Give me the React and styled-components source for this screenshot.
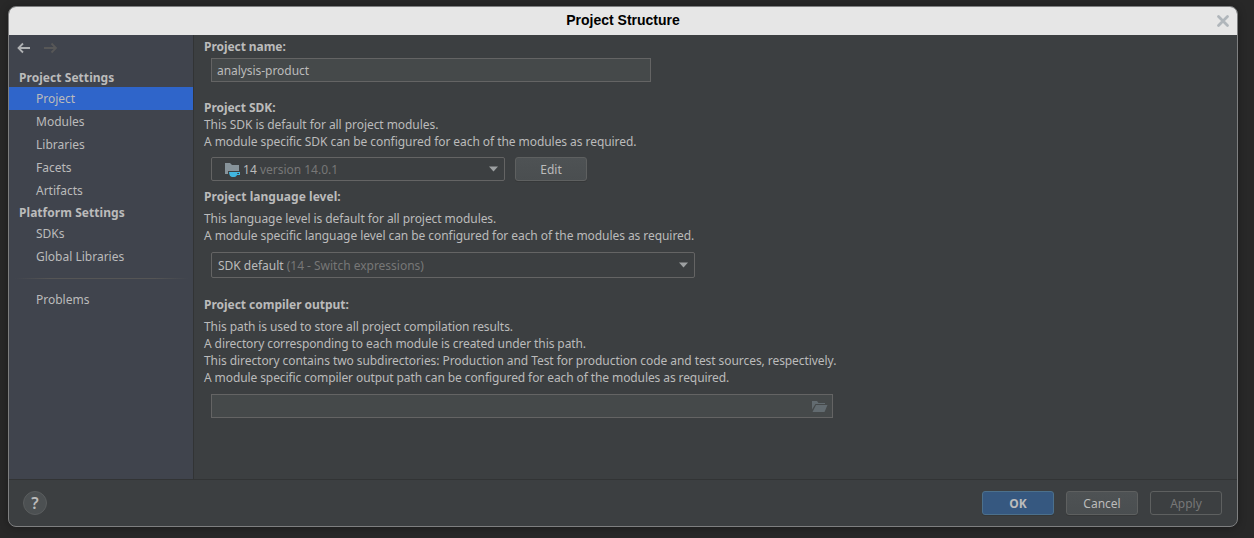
import React from "react";
import styled, { createGlobalStyle, css } from "styled-components";

const GlobalStyle = createGlobalStyle`
  * { box-sizing: border-box; }
  html, body { margin: 0; padding: 0; background: #282828; }
  body { width: 1254px; height: 538px; overflow: hidden; font-family: "Noto Sans", sans-serif; font-size: 12px; color: #bbbbbb; }
`;

const Desktop = styled.div`
  width: 1254px;
  height: 538px;
  padding: 6px 16px 11px 8px;
  background: #282828;
`;

const Dialog = styled.div`
  display: flex;
  flex-direction: column;
  width: 1230px;
  height: 521px;
  border: 1px solid #7e7f80;
  border-radius: 8px;
  overflow: hidden;
  background: #3c3f41;
  box-shadow: 0 1px 8px rgba(0, 0, 0, 0.3);
`;

const TitleBar = styled.header`
  display: grid;
  grid-template-columns: 28px 1fr 28px;
  align-items: center;
  flex: none;
  height: 28px;
  background: #e6e6e6;
  color: #000;
  font: bold 14px/26px "Liberation Sans", Arial, sans-serif;
`;

const Title = styled.div`
  grid-column: 2;
  text-align: center;
  height: 28px;
`;

const Body = styled.div`
  display: flex;
  height: 444px;
  flex: none;
`;

const Sidebar = styled.nav`
  width: 185px;
  flex: none;
  background: #40444d;
  border-right: 1px solid #323435;
`;

const History = styled.div`
  display: flex;
  gap: 11px;
  height: 32px;
  padding: 6px 0 0 8px;
`;

const NavHeading = styled.div`
  height: 20px;
  padding-left: 10px;
  font-weight: bold;
  line-height: 22px;
  letter-spacing: 0.05px;
`;

const NavItem = styled.div`
  height: 23px;
  padding-left: 27px;
  line-height: 23px;
  background: ${(p) => (p.$selected ? "#2f65ca" : "transparent")};
`;

const NavSeparator = styled.div`
  height: 1px;
  margin: 10px 4px 9px 6px;
  background: linear-gradient(90deg, transparent, #555555 20%, #555555 80%, transparent);
`;

const Content = styled.main`
  flex: 1;
  padding: 3px 0 0 10px;
`;

const Section = styled.section`
  margin-bottom: ${(p) => p.$after || 0}px;
`;

const Heading = styled.div`
  font-weight: bold;
  line-height: 17px;
  height: 17px;
  margin-bottom: ${(p) => p.$after || 0}px;
  letter-spacing: ${(p) => p.$tracking || 0}px;
`;

const Line = styled.div`
  height: 17px;
  line-height: 17px;
  white-space: nowrap;
  letter-spacing: ${(p) => p.$tracking || -0.065}px;
`;

const Controls = styled.div`
  display: flex;
  gap: 10px;
  padding-left: 7px;
  margin-top: ${(p) => p.$before}px;
`;

const box = css`
  display: flex;
  align-items: center;
  border: 1px solid #646464;
  width: ${(p) => p.$width}px;
`;

const Field = styled.div`
  ${box}
  height: 24px;
  padding: 0 4px 0 5px;
  background: #45494a;
  justify-content: space-between;
  letter-spacing: -0.05px;
`;

const Combo = styled.div`
  ${box}
  height: ${(p) => p.$height}px;
  padding: 0 5px 0 ${(p) => p.$indent}px;
  border-radius: 2px;
  letter-spacing: -0.015px;
`;

const ComboText = styled.div`
  flex: 1;
  white-space: pre;
  margin-left: ${(p) => p.$shift || 0}px;
`;

const Muted = styled.span`
  color: #777777;
`;

const variants = {
  plain: css`
    background: linear-gradient(#4e5254, #4a4e50);
    border-color: #5e6060;
    box-shadow: 0 1px 0 #363839;
  `,
  primary: css`
    background: #365880;
    border-color: #4c708c;
    font-weight: bold;
    box-shadow: 0 1px 0 #363839;
  `,
  disabled: css`
    background: transparent;
    border-color: #5e6060;
    color: #777777;
  `,
};

const Button = styled.button`
  width: 72px;
  height: 24px;
  padding: 1px 0 0;
  border: 1px solid;
  border-radius: 3px;
  color: #bbbbbb;
  font: 12px/21px "Noto Sans", sans-serif;
  ${(p) => variants[p.$variant || "plain"]}
`;

const Footer = styled.footer`
  display: flex;
  align-items: center;
  justify-content: space-between;
  flex: 1;
  padding: 0 15px 0 14px;
  border-top: 1px solid #323435;
`;

const Help = styled.div`
  width: 24px;
  height: 24px;
  border: 1px solid #5a5d5e;
  border-radius: 50%;
  background: #4c5052;
  font-size: 16px;
  font-weight: 600;
  line-height: 22px;
  text-align: center;
`;

const Actions = styled.div`
  display: flex;
  gap: 12px;
`;

const Arrow = ({ forward }) => (
  <svg width="15" height="13" viewBox="0 0 15 13" fill="none" stroke={forward ? "#575757" : "#afb1b3"} strokeWidth="1.8">
    <path d={forward ? "M1 7H13M8.5 2.5L13 7L8.5 11.5" : "M13 7H1.5M6 2.5L1.5 7L6 11.5"} />
  </svg>
);

const CloseIcon = () => (
  <svg width="28" height="14" viewBox="-7 0 28 14" stroke="#b0b6bb" strokeWidth="2.8" strokeLinecap="round">
    <path d="M2.5 2.5L11.5 11.5M11.5 2.5L2.5 11.5" />
  </svg>
);

const Chevron = () => (
  <svg width="10" height="6" viewBox="0 0 10 6">
    <path d="M0 0.5H9L4.5 5.5Z" fill="#9da0a2" />
  </svg>
);

const SdkIcon = () => (
  <svg width="17" height="16" viewBox="0 0 17 16">
    <path d="M1 2H6L8 4H15V10H4V13H1Z" fill="#87939a" />
    <path d="M5 11H16V14H13C12.5 15 11.5 16 10.5 16H8.5C6.5 16 5 14 5 11Z" fill="#40b6e0" />
    <path d="M13.2 12H15V13H13.2Z" fill="#3c3f41" />
  </svg>
);

const FolderOpen = () => (
  <svg width="16" height="12" viewBox="0 0 16 12" fill="#626b70">
    <path d="M0 1H5L6.5 3H13V4H3.5L0 9.5Z" />
    <path d="M4 5H15.5L12.5 12H0.5Z" />
  </svg>
);

export default function App() {
  return (
    <Desktop>
      <GlobalStyle />
      <Dialog>
        <TitleBar>
          <Title>Project Structure</Title>
          <CloseIcon />
        </TitleBar>
        <Body>
          <Sidebar>
            <History>
              <Arrow />
              <Arrow forward />
            </History>
            <NavHeading>Project Settings</NavHeading>
            <NavItem $selected>Project</NavItem>
            <NavItem>Modules</NavItem>
            <NavItem>Libraries</NavItem>
            <NavItem>Facets</NavItem>
            <NavItem>Artifacts</NavItem>
            <NavHeading>Platform Settings</NavHeading>
            <NavItem>SDKs</NavItem>
            <NavItem>Global Libraries</NavItem>
            <NavSeparator />
            <NavItem>Problems</NavItem>
          </Sidebar>
          <Content>
            <Section $after={17}>
              <Heading $tracking={-0.06}>Project name:</Heading>
              <Controls $before={3}>
                <Field $width={440}>analysis-product</Field>
              </Controls>
            </Section>
            <Section $after={7}>
              <Heading $tracking={-0.04}>Project SDK:</Heading>
              <Line $tracking={-0.06}>This SDK is default for all project modules.</Line>
              <Line $tracking={-0.06}>A module specific SDK can be configured for each of the modules as required.</Line>
              <Controls $before={7}>
                <Combo $width={294} $height={24} $indent={12}>
                  <SdkIcon />
                  <ComboText $shift={-1}> 14 <Muted>version 14.0.1</Muted></ComboText>
                  <Chevron />
                </Combo>
                <Button>Edit</Button>
              </Controls>
            </Section>
            <Section $after={18}>
              <Heading $after={5} $tracking={0.04}>Project language level:</Heading>
              <Line>This language level is default for all project modules.</Line>
              <Line>A module specific language level can be configured for each of the modules as required.</Line>
              <Controls $before={8}>
                <Combo $width={484} $height={26} $indent={6}>
                  <ComboText>SDK default <Muted>(14 - Switch expressions)</Muted></ComboText>
                  <Chevron />
                </Combo>
              </Controls>
            </Section>
            <Section>
              <Heading $after={5} $tracking={-0.03}>Project compiler output:</Heading>
              <Line $tracking={-0.075}>This path is used to store all project compilation results.</Line>
              <Line $tracking={-0.09}>A directory corresponding to each module is created under this path.</Line>
              <Line>This directory contains two subdirectories: Production and Test for production code and test sources, respectively.</Line>
              <Line $tracking={-0.095}>A module specific compiler output path can be configured for each of the modules as required.</Line>
              <Controls $before={8}>
                <Field $width={622}>
                  <span />
                  <FolderOpen />
                </Field>
              </Controls>
            </Section>
          </Content>
        </Body>
        <Footer>
          <Help>?</Help>
          <Actions>
            <Button $variant="primary">OK</Button>
            <Button>Cancel</Button>
            <Button $variant="disabled">Apply</Button>
          </Actions>
        </Footer>
      </Dialog>
    </Desktop>
  );
}
